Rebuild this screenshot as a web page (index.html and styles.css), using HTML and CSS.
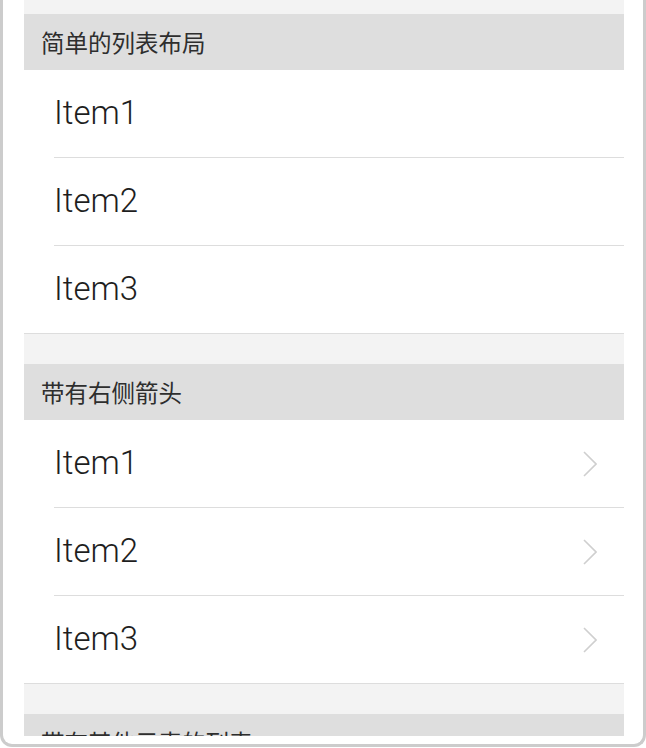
FILE: index.html
```html
<!DOCTYPE html>
<html lang="zh">
<head>
<meta charset="utf-8">
<title>列表</title>
<link rel="stylesheet" href="styles.css">
</head>
<body>
<div class="device">
  <div class="screen">
    <div class="top-gap"></div>
    <section class="group">
      <div class="group-title">简单的列表布局</div>
      <ul class="list">
        <li class="item"><span class="label">Item1</span></li>
        <li class="item"><span class="label">Item2</span></li>
        <li class="item"><span class="label">Item3</span></li>
      </ul>
    </section>
    <section class="group">
      <div class="group-title">带有右侧箭头</div>
      <ul class="list">
        <li class="item"><span class="label">Item1</span><svg class="chev" width="14" height="26" viewBox="0 0 14 26"><polyline points="1,1 13,13 1,25" fill="none" stroke="#cfcfcf" stroke-width="1.6"/></svg></li>
        <li class="item"><span class="label">Item2</span><svg class="chev" width="14" height="26" viewBox="0 0 14 26"><polyline points="1,1 13,13 1,25" fill="none" stroke="#cfcfcf" stroke-width="1.6"/></svg></li>
        <li class="item"><span class="label">Item3</span><svg class="chev" width="14" height="26" viewBox="0 0 14 26"><polyline points="1,1 13,13 1,25" fill="none" stroke="#cfcfcf" stroke-width="1.6"/></svg></li>
      </ul>
    </section>
    <section class="group">
      <div class="group-title">带有其他元素的列表</div>
    </section>
  </div>
</div>
</body>
</html>
```
FILE: styles.css
```css
html, body {
  margin: 0;
  padding: 0;
  background: #ffffff;
}
.device {
  box-sizing: border-box;
  width: 646px;
  height: 747px;
  border: 3px solid #cccccc;
  border-top: none;
  border-radius: 0 0 12px 12px;
  background: #ffffff;
  padding: 0 19px 8px 21px;
}
.screen {
  height: 736px;
  overflow: hidden;
  background: #f3f3f3;
}
.top-gap {
  height: 14px;
}
.group {
  margin-bottom: 30px;
}
.group-title {
  height: 56px;
  line-height: 56px;
  background: #dedede;
  padding-left: 17px;
  font-family: "Noto Sans CJK SC", "Noto Sans", sans-serif;
  font-size: 23.5px;
  color: #2e2e2e;
}
.list {
  list-style: none;
  margin: 0;
  padding: 0 0 0 30px;
  background: #ffffff;
  border-bottom: 1px solid #dddddd;
}
.item {
  display: flex;
  align-items: center;
  justify-content: space-between;
  height: 87px;
  border-bottom: 1px solid #dddddd;
  padding-right: 27px;
}
.item:last-child {
  border-bottom: none;
}
.label {
  font-family: "Roboto", "Liberation Sans", sans-serif;
  font-weight: 300;
  font-size: 33px;
  color: #1e1e1e;
  margin-top: -2px;
}
.chev {
  display: block;
}
```
